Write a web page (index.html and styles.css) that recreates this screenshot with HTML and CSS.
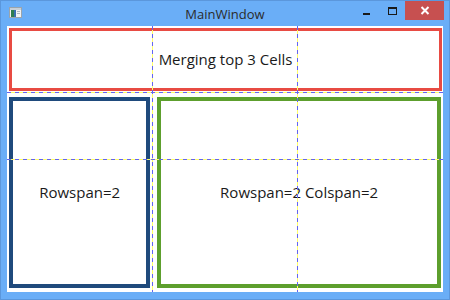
FILE: index.html
```html
<!DOCTYPE html>
<html>
<head>
<meta charset="utf-8">
<link rel="stylesheet" href="styles.css">
</head>
<body>
<div class="window">
  <div class="titlebar">
    <div class="tb-left">
      <svg class="app-icon" width="13" height="11" viewBox="0 0 13 11">
        <rect x="0.5" y="0.5" width="12" height="10" fill="#f2f2f2" stroke="#9aa4ad"/>
        <rect x="1" y="1" width="11" height="2" fill="#c8d0d8"/>
        <rect x="2" y="3" width="3" height="7" fill="#2f7d4f"/>
        <rect x="5" y="3" width="2" height="7" fill="#3a6fb0"/>
        <rect x="8" y="4" width="3" height="1" fill="#b0b8c0"/>
        <rect x="8" y="6" width="3" height="1" fill="#b0b8c0"/>
      </svg>
    </div>
    <div class="title">MainWindow</div>
    <div class="tb-right">
      <div class="ctl ctl-min"><span class="min-bar"></span></div>
      <div class="ctl ctl-max"><span class="max-box"></span></div>
      <div class="ctl ctl-close">
        <svg width="10" height="9" viewBox="0 0 10 9">
          <path d="M1.5 1 L8.5 8 M8.5 1 L1.5 8" stroke="#ffffff" stroke-width="2" fill="none"/>
        </svg>
      </div>
    </div>
  </div>
  <div class="client">
    <div class="cell cell-top">Merging top 3 Cells</div>
    <div class="cell cell-left">Rowspan=2</div>
    <div class="cell cell-right">Rowspan=2 Colspan=2</div>
    <div class="gridline vline v1"></div>
    <div class="gridline vline v2"></div>
    <div class="gridline hline h1"></div>
    <div class="gridline hline h2"></div>
  </div>
</div>
</body>
</html>
```

FILE: styles.css
```css
html, body {
  margin: 0;
  padding: 0;
  background: #6aaef7;
}
.window {
  width: 450px;
  height: 300px;
  box-sizing: border-box;
  background: #6aaef7;
  border: 1px solid #5b97dc;
  padding: 0 6px 7px 6px;
  display: flex;
  flex-direction: column;
  font-family: "Segoe UI", "Open Sans", "Noto Sans", sans-serif;
}
.titlebar {
  height: 25px;
  flex: none;
  display: grid;
  grid-template-columns: 1fr auto 1fr;
  align-items: start;
}
.tb-left {
  padding: 6px 0 0 2px;
}
.app-icon {
  display: block;
}
.title {
  font-size: 13px;
  color: #2b2b2b;
  line-height: 16px;
  padding-top: 5px;
}
.tb-right {
  display: flex;
  justify-content: flex-end;
  align-items: flex-start;
  margin-right: -1px;
}
.ctl {
  height: 19px;
  display: flex;
  align-items: center;
  justify-content: center;
}
.ctl-min {
  width: 26px;
}
.min-bar {
  display: block;
  width: 7px;
  height: 2px;
  background: #1a1a1a;
  margin-top: 7px;
}
.ctl-max {
  width: 26px;
}
.max-box {
  display: block;
  width: 7px;
  height: 5px;
  border: 1px solid #1a1a1a;
  border-top-width: 2px;
  margin-top: 1px;
}
.ctl-close {
  width: 39px;
  background: #c75050;
}
.ctl-close svg {
  display: block;
}
.client {
  flex: 1;
  background: #ffffff;
  position: relative;
  display: grid;
  grid-template-columns: 1fr 1fr 1fr;
  grid-template-rows: 1fr 1fr 2fr;
}
.cell {
  display: flex;
  align-items: center;
  justify-content: center;
  font-size: 15px;
  color: #1a1a1a;
  box-sizing: border-box;
}
.cell-top {
  grid-column: 1 / 4;
  grid-row: 1;
  margin: 2px 1px 2px 2px;
  border: 3px solid #e84b43;
}
.cell-left {
  grid-column: 1;
  grid-row: 2 / 4;
  margin: 4px 2px 4px 2px;
  border: 4px solid #1f4a7c;
}
.cell-right {
  grid-column: 2 / 4;
  grid-row: 2 / 4;
  margin: 4px 2px 4px 5px;
  border: 4px solid #5d9f2d;
}
.gridline {
  position: absolute;
}
.vline {
  top: 0;
  bottom: 0;
  width: 1px;
  background: repeating-linear-gradient(to bottom, #6464f0 0 4px, #ffff66 4px 8px);
}
.v1 { left: 145px; }
.v2 { left: 290px; }
.hline {
  left: 0;
  right: 0;
  height: 1px;
  background: repeating-linear-gradient(to right, #6464f0 0 4px, #ffff66 4px 8px);
}
.h1 { top: 66px; }
.h2 { top: 133px; }
```
